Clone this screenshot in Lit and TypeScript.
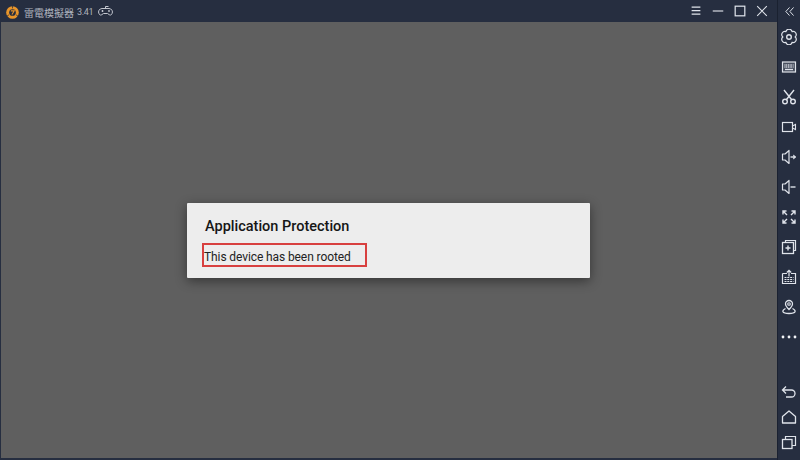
import { LitElement, html, css, svg } from "lit";
import { customElement } from "lit/decorators.js";

const ic = (body: unknown, w = 16, h = 16) => html`<svg class="ic" width=${w} height=${h} viewBox="0 0 16 16" fill="none" stroke="#dfe3ea" stroke-width="1.2">${body}</svg>`;

const side = [
  svg`<path d="M14.200 8A3.200 3.200 0 0 1 11.100 13.400A3.200 3.200 0 0 1 4.900 13.400A3.200 3.200 0 0 1 1.800 8A3.200 3.200 0 0 1 4.900 2.600A3.200 3.200 0 0 1 11.100 2.600A3.200 3.200 0 0 1 14.200 8z" stroke-width="1.200"/><circle cx="8" cy="8" r="2.300" stroke-width="1.400"/>`,
  svg`<rect x="1.500" y="3" width="13" height="10" stroke-width="1.200" fill="#dfe3ea" fill-opacity=".18"/><path d="M3.500 6h9M3.500 8h9" stroke-width="1.500" stroke-dasharray="1 .7"/><path d="M4 10.500h8" stroke-width="1.300"/>`,
  svg`<path d="M3 1l7.500 9.500M13 1L5.500 10.500" stroke-width="1.400"/><circle cx="4" cy="12.500" r="2.300" stroke-width="1.400"/><circle cx="12" cy="12.500" r="2.300" stroke-width="1.400"/>`,
  svg`<rect x="1.500" y="3.500" width="10" height="9" stroke-width="1.200"/><path d="M11.500 7l3-1.500v5l-3-1.500" stroke-width="1.100"/>`,
  svg`<path d="M1.500 5h2.500l4-3.500v13L4 11H1.500z" stroke-width="1.200" stroke-linejoin="round"/><path d="M9.500 8H12.500" stroke-width="1.400"/><path d="M12.500 6v4l2.500-2z" fill="#dfe3ea" stroke-width=".6"/>`,
  svg`<path d="M1.500 5h2.500l4-3.500v13L4 11H1.500z" stroke-width="1.200" stroke-linejoin="round"/><path d="M9.500 8H14.500" stroke-width="1.400"/>`,
  svg`<g stroke-width="1.400"><path d="M2 2l4 4M2 5.500V2h3.500M14 2l-4 4M10.500 2H14v3.500M2 14l4-4M2 10.500V14h3.500M14 14l-4-4M10.500 14H14v-3.500"/></g>`,
  svg`<path d="M4.500 3.500V1.500h10v10h-2" stroke-width="1.200"/><rect x="1.500" y="3.500" width="11" height="11" stroke-width="1.300"/><path d="M7 6.500v5M4.500 9h5" stroke-width="1.400"/>`,
  svg`<path d="M1.500 4.500h4.500M10 4.500h4.500v10h-13v-10" stroke-width="1.200"/><path d="M8 7.500V1.500M5.800 3.500L8 1.300l2.200 2.200" stroke-width="1.200"/><path d="M3.500 8.500h9M3.500 10.500h9M3.500 12.500h9" stroke-width="1.100" stroke-dasharray="2 .8"/>`,
  svg`<path d="M8 10.500C6 8.500 4.500 7 4.500 5a3.500 3.500 0 0 1 7 0c0 2-1.500 3.500-3.500 5.500z" stroke-width="1.300"/><circle cx="8" cy="5" r="1.300" stroke-width="1.100"/><path d="M4.500 9.500C2.500 10.500 1.500 11.500 2 12.800c.6 1.400 3.500 1.700 6 1.700s5.400-.3 6-1.700c.5-1.300-.5-2.300-2.500-3.300" stroke-width="1.300"/>`,
];

@customElement("app-root")
export class AppRoot extends LitElement {
  static styles = css`
    :host { display: block; width: 800px; height: 460px; overflow: hidden; background: #262e40; font-family: Roboto, "Noto Sans CJK TC", sans-serif; }
    .win { display: grid; grid-template-columns: 1fr 23px; width: 800px; height: 460px; }
    .main { display: flex; flex-direction: column; min-width: 0; }
    .bar { height: 22px; display: flex; align-items: center; padding: 2px 0 0 6px; box-sizing: border-box; color: #aeb3bd; }
    .logo { margin-right: 5px; }
    .title { font-size: 10px; white-space: nowrap; }
    .ver { font-size: 9px; margin-left: 3px; letter-spacing: -0.3px; }
    .pad { margin-left: 5px; }
    .spacer { flex: 1; }
    .controls { display: flex; align-items: center; gap: 8px; padding: 0 8px 2px 0; }
    .screen { flex: 1; margin: 0 0 2px 1px; background: #5f5f5f; display: flex; align-items: center; justify-content: center; }
    .dialog { position: relative; width: 403px; height: 75px; box-sizing: border-box; margin: 0 0 0 -1px; padding: 15px 18px 0 18px; background: #ededed; border-radius: 1px; box-shadow: 0 3px 12px rgba(0,0,0,.45); color: #161616; }
    .dialog h1 { margin: 0; font-size: 14.500px; line-height: 18px; font-weight: 500; }
    .dialog p { margin: 13px 0 0 -1px; font-size: 12px; line-height: 16px; letter-spacing: -0.1px; color: #222; }
    .mark { position: absolute; left: 15px; top: 40px; width: 165px; height: 24px; box-sizing: border-box; border: 2px solid #d8403f; }
    .rail { display: flex; flex-direction: column; align-items: center; border-left: 1px solid #1a2130; }
    .rail .top { height: 22px; display: flex; align-items: center; justify-content: center; }
    .tools { display: flex; flex-direction: column; align-items: center; gap: 14px; padding-top: 7px; }
    .nav { margin-top: auto; display: flex; flex-direction: column; align-items: center; gap: 9px; padding-bottom: 10px; }
    .ic { display: block; }
  `;

  render() {
    return html`<div class="win">
      <div class="main">
        <div class="bar">
          <svg class="logo" width="13" height="13" viewBox="0 0 14 14">
            <circle cx="7" cy="7" r="6.800" fill="#e8952a"/>
            <circle cx="7" cy="7" r="3.600" fill="#262e40"/>
            <path d="M5.200 5.300h3.600L6.400 9.200" stroke="#e8952a" stroke-width="1.200" fill="none"/>
            <path d="M7 0v2.500M1 11l2.200-1.500M13 11l-2.200-1.500" stroke="#262e40" stroke-width=".8"/>
          </svg>
          <span class="title">雷電模擬器</span><span class="ver">3.41</span>
          <svg class="pad" width="15" height="14" viewBox="0 0 15 14" fill="none" stroke="#c3c7cf" stroke-width="1">
            <path d="M4 3.500h7a3.500 3.500 0 0 1 3 5.200c-.6 1.500-2 1.800-3 .8L9.500 8.500h-4L4 9.500c-1 1-2.400.7-3-.8a3.500 3.500 0 0 1 3-5.200z"/><path d="M7.500 3.500V1.500h3M3.500 6h2M4.500 5v2"/><circle cx="11" cy="6" r=".6"/>
          </svg>
          <span class="spacer"></span>
          <div class="controls">
            ${ic(svg`<path d="M3 3.500h10M3 7.500h10M3 11.500h10" stroke-width="1.300"/>`, 14, 14)}
            ${ic(svg`<path d="M2 8h12" stroke-width="1.300"/>`, 14, 14)}
            ${ic(svg`<rect x="2.500" y="2.500" width="11" height="11" stroke-width="1.400"/>`, 14, 14)}
            ${ic(svg`<path d="M2.500 2.500l11 11M13.500 2.500l-11 11" stroke-width="1.200"/>`, 14, 14)}
          </div>
        </div>
        <div class="screen">
          <div class="dialog">
            <h1>Application Protection</h1>
            <p>This device has been rooted</p>
            <div class="mark"></div>
          </div>
        </div>
      </div>
      <div class="rail">
        <div class="top">${ic(svg`<path d="M8 3L3.500 8 8 13M13 3L8.500 8 13 13" stroke-width="1.200"/>`, 13, 13)}</div>
        <div class="tools">${side.map((b) => ic(b))}
          <svg class="ic" width="16" height="16" viewBox="0 0 16 16" fill="#f2f4f7"><circle cx="2" cy="8" r="1.400"/><circle cx="8" cy="8" r="1.400"/><circle cx="14" cy="8" r="1.400"/></svg>
        </div>
        <div class="nav">
          ${ic(svg`<path d="M5 2.500L1.500 6 5 9.500M1.500 6h9a3.500 3.500 0 0 1 0 7H5" stroke-width="1.300"/>`)}
          ${ic(svg`<path d="M1.500 7.500L8 2l6.500 5.500v6.500h-13z" stroke-width="1.300" stroke-linejoin="round"/>`)}
          ${ic(svg`<rect x="1.500" y="5.500" width="9.500" height="9" stroke-width="1.300"/><path d="M4.500 5.500v-3h10v9H11" stroke-width="1.200"/>`)}
        </div>
      </div>
    </div>`;
  }
}
